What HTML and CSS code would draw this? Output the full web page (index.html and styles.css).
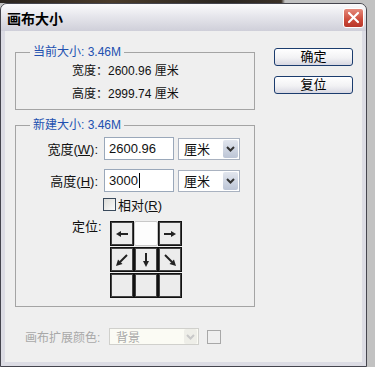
FILE: index.html
```html
<!DOCTYPE html>
<html lang="zh-CN">
<head>
    <meta charset="UTF-8">
    <meta name="viewport" content="width=device-width, initial-scale=1.0">
    <title>画布大小</title>
    <link rel="stylesheet" href="styles.css">
</head>
<body>
    <div class="screen">
        <div class="photo"></div>
        <div class="window">
            <div class="titlebar">
                <span class="title">画布大小</span>
                <span class="close">
                    <svg width="13" height="13" viewBox="0 0 13 13"><path d="M2 2 L11 11 M11 2 L2 11" stroke="#fff" stroke-width="2.2" stroke-linecap="round"/></svg>
                </span>
            </div>
            <div class="client">
                <div class="main">
                    <fieldset class="group current">
                        <legend>当前大小: 3.46M</legend>
                        <div class="info">宽度：2600.96 厘米</div>
                        <div class="info">高度：2999.74 厘米</div>
                    </fieldset>

                    <fieldset class="group resize">
                        <legend>新建大小: 3.46M</legend>
                        <div class="field">
                            <span class="field-label">宽度(<u>W</u>):</span>
                            <div class="input">2600.96</div>
                            <div class="select">
                                <span class="select-text">厘米</span>
                                <span class="drop"><svg width="9" height="6" viewBox="0 0 9 6"><path d="M1 1 L4.5 4.5 L8 1" fill="none" stroke="#333" stroke-width="2"/></svg></span>
                            </div>
                        </div>
                        <div class="field">
                            <span class="field-label">高度(<u>H</u>):</span>
                            <div class="input">3000<span class="caret"></span></div>
                            <div class="select">
                                <span class="select-text">厘米</span>
                                <span class="drop"><svg width="9" height="6" viewBox="0 0 9 6"><path d="M1 1 L4.5 4.5 L8 1" fill="none" stroke="#333" stroke-width="2"/></svg></span>
                            </div>
                        </div>
                        <div class="check">
                            <span class="box"></span>
                            <span>相对(<u>R</u>)</span>
                        </div>
                        <div class="anchor">
                            <span class="anchor-label">定位:</span>
                            <div class="grid">
                                <span class="cell"><svg width="18" height="18" viewBox="0 0 18 18"><path d="M7 9 H15" stroke="#222" stroke-width="2"/><path d="M3 9 L8 6 L8 12 Z" fill="#222"/></svg></span>
                                <span class="cell origin"></span>
                                <span class="cell"><svg width="18" height="18" viewBox="0 0 18 18"><path d="M3 9 H11" stroke="#222" stroke-width="2"/><path d="M15 9 L10 6 L10 12 Z" fill="#222"/></svg></span>
                                <span class="cell"><svg width="18" height="18" viewBox="0 0 18 18"><path d="M14 4 L7 11" stroke="#222" stroke-width="2"/><path d="M3 15 L5 8.5 L9.5 13 Z" fill="#222"/></svg></span>
                                <span class="cell"><svg width="18" height="18" viewBox="0 0 18 18"><path d="M9 2 V11" stroke="#222" stroke-width="2"/><path d="M9 16 L6 10 L12 10 Z" fill="#222"/></svg></span>
                                <span class="cell"><svg width="18" height="18" viewBox="0 0 18 18"><path d="M4 4 L11 11" stroke="#222" stroke-width="2"/><path d="M15 15 L8.5 13 L13 8.5 Z" fill="#222"/></svg></span>
                                <span class="cell"></span>
                                <span class="cell"></span>
                                <span class="cell"></span>
                            </div>
                        </div>
                    </fieldset>

                    <div class="extend">
                        <span class="extend-label">画布扩展颜色:</span>
                        <div class="select disabled">
                            <span class="select-text">背景</span>
                            <span class="drop"><svg width="9" height="6" viewBox="0 0 9 6"><path d="M1 1 L4.5 4.5 L8 1" fill="none" stroke="#c8c8c8" stroke-width="2"/></svg></span>
                        </div>
                        <span class="swatch"></span>
                    </div>
                </div>
                <div class="side">
                    <button class="btn">确定</button>
                    <button class="btn">复位</button>
                </div>
            </div>
        </div>
    </div>
</body>
</html>
```

FILE: styles.css
```css
* {
    box-sizing: border-box;
}
body {
    margin: 0;
    font-family: "Liberation Sans", "Noto Sans CJK SC", sans-serif;
    font-size: 12px;
    color: #111;
}
.screen {
    width: 375px;
    height: 367px;
    background: #c2c2c2;
    overflow: hidden;
}
.photo {
    height: 3px;
    background: linear-gradient(90deg, #2b2520 0, #4a3b2a 30%, #2a2622 60%, #3a3026 75%, #c2c2c2 76%);
}
.window {
    width: 367px;
    height: 364px;
    border: 1px solid #45454e;
    border-radius: 7px 7px 0 0;
    overflow: hidden;
    display: flex;
    flex-direction: column;
}
.titlebar {
    height: 27px;
    flex: none;
    display: flex;
    align-items: center;
    padding: 0 2px 0 6px;
    background: linear-gradient(#fbfbfc, #e6e6ec 45%, #cfcfd9);
}
.title {
    font-weight: bold;
    font-size: 14px;
    color: #000;
}
.close {
    margin-left: auto;
    width: 21px;
    height: 20px;
    border: 1px solid #fff;
    border-radius: 3px;
    background: linear-gradient(#e58a7c, #cc4a3a 60%, #b8362a);
    display: flex;
    align-items: center;
    justify-content: center;
}
.client {
    flex: 1;
    display: flex;
    background: #efefef;
    border: 4px solid #dcdce4;
    border-top: 0;
    padding: 13px 0 0 10px;
}
.main {
    width: 240px;
}
.group {
    margin: 0;
    padding: 0;
    border: 1px solid #a4a4a4;
    min-width: 0;
}
.group legend {
    margin-left: 14px;
    padding: 0 3px;
    line-height: 16px;
    color: #2150b0;
}
.current {
    padding-bottom: 3px;
}
.info {
    height: 23px;
    line-height: 23px;
    padding-left: 56px;
}
.resize {
    margin-top: 7px;
    padding: 4px 0 8px 0;
}
.field {
    display: flex;
    align-items: center;
    height: 23px;
    margin-bottom: 9px;
    font-size: 13px;
}
.field-label {
    width: 84px;
    text-align: right;
    padding-right: 2px;
}
.input {
    margin-left: 4px;
    width: 70px;
    height: 23px;
    background: #fff;
    border: 1px solid #9aa8ba;
    padding-left: 4px;
    line-height: 21px;
    display: flex;
    align-items: center;
}
.caret {
    display: inline-block;
    width: 1px;
    height: 15px;
    background: #000;
    margin-left: 1px;
}
.select {
    margin-left: 4px;
    width: 62px;
    height: 22px;
    background: #fff;
    border: 1px solid #a9b2c0;
    display: flex;
    align-items: center;
}
.select-text {
    flex: 1;
    padding-left: 5px;
}
.drop {
    width: 15px;
    height: 18px;
    margin-right: 1px;
    border-radius: 2px;
    background: linear-gradient(#e2e6ee, #bcc5d6);
    display: flex;
    align-items: center;
    justify-content: center;
}
.check {
    display: flex;
    align-items: center;
    height: 18px;
    margin-top: -6px;
    padding-left: 87px;
    font-size: 13px;
}
.box {
    width: 13px;
    height: 13px;
    border: 1px solid #3a4a5c;
    background: linear-gradient(135deg, #dcdcd8, #fafafa);
    margin-right: 2px;
}
.anchor {
    display: flex;
    align-items: flex-start;
    margin-top: 8px;
    padding-left: 56px;
}
.anchor-label {
    width: 38px;
    line-height: 12px;
    font-size: 13px;
}
.grid {
    display: grid;
    grid-template-columns: repeat(3, 24px);
    grid-auto-rows: 25px;
    row-gap: 1px;
}
.cell {
    border: 1px solid #111;
    box-shadow: inset 0 0 0 1px #444;
    background: #ececec;
    display: flex;
    align-items: center;
    justify-content: center;
}
.cell.origin {
    background: #fdfdfd;
    border-color: #c8c8c8;
    box-shadow: none;
    border-radius: 2px;
}
.extend {
    display: flex;
    align-items: center;
    margin-top: 21px;
    padding-left: 10px;
    color: #a8a8a8;
}
.extend-label {
    width: 80px;
}
.select.disabled {
    width: 90px;
    height: 17px;
    background: #fbfbf4;
    border-color: #d0d0cc;
}
.select.disabled .select-text {
    padding-left: 6px;
}
.select.disabled .drop {
    width: 13px;
    height: 15px;
    background: #eeeee8;
}
.swatch {
    margin-left: 8px;
    width: 14px;
    height: 14px;
    border: 1px solid #a8a8a8;
}
.side {
    margin-left: 19px;
    padding-top: 4px;
    display: flex;
    flex-direction: column;
    gap: 10px;
}
.btn {
    width: 79px;
    height: 18px;
    padding: 0;
    border: 1px solid #1b3c6e;
    border-radius: 3px;
    background: linear-gradient(#ffffff, #f2f2f4 55%, #d8d8e2);
    font-family: "Liberation Sans", "Noto Sans CJK SC", sans-serif;
    font-size: 13px;
    line-height: 16px;
    color: #000;
}
```
